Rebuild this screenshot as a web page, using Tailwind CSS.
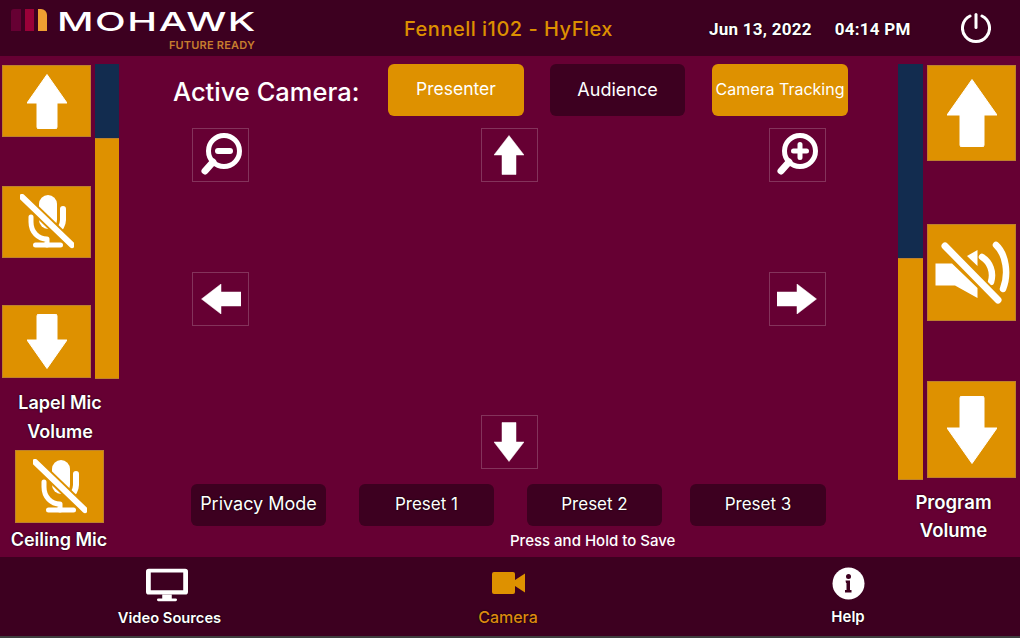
<!DOCTYPE html>
<html lang="en">
<head>
    <meta charset="UTF-8">
    <title>Fennell i102 - HyFlex</title>
    <script src="https://cdn.jsdelivr.net/npm/@tailwindcss/browser@4"></script>
</head>
<body class="w-[1020px] h-[638px] overflow-hidden bg-[#3f3f3f] font-[Inter] text-white">

    <!-- header -->
    <header class="h-[56px] bg-[#3d0020] flex items-start relative">
        <div class="w-[300px] h-full pl-[11px] pt-[9px] flex gap-[4px] items-start shrink-0">
            <div class="w-[10px] h-[22px] rounded-tl-[3px] bg-[#660033]"></div>
            <div class="w-[9px] h-[22px] bg-[#990038]"></div>
            <div class="w-[9px] h-[22px] rounded-tr-[6px] bg-[#ef9f32]"></div>
            <div class="ml-[6px] -mt-[3px]">
                <div class="origin-left scale-x-[1.54] text-[26px] leading-[32px] font-medium tracking-[1px] whitespace-nowrap">MOHAWK</div>
                <div class="w-[198px] text-right text-[11px] leading-[14px] font-semibold tracking-[0.2px] text-[#c77d2e]">FUTURE READY</div>
            </div>
        </div>
        <div class="w-[418px] ml-[-1px] shrink-0 pl-[1px] pt-[15px] text-center text-[20px] leading-[28px] font-medium tracking-[0.5px] text-[#dd9000]">Fennell i102 - HyFlex</div>
        <div class="ml-[-8px] pt-[19px] flex gap-[23px] font-[Roboto] font-bold text-[17px] leading-[20px] tracking-[0.25px] [text-shadow:0_0_2px_#000]">
            <span>Jun 13, 2022</span>
            <span>04:14 PM</span>
        </div>
        <svg class="ml-[50px] mt-[13px]" width="30" height="32" viewBox="0 0 30 32" fill="none" stroke="#fff" stroke-linecap="round">
            <path d="M9 3a13.500 13.500 0 1 0 12 0" stroke-width="3"/>
            <path d="M15 1.500v13" stroke-width="3"/>
        </svg>
    </header>

    <main class="h-[501px] bg-[#660033] flex">

        <!-- lapel mic volume -->
        <section class="w-[120px] shrink-0 pl-[2px]">
            <div class="flex gap-[4px] pt-[8px]">
                <div class="w-[89px] flex flex-col pt-[1px]">
                    <button class="h-[72px] bg-[#de9100] border border-[#a9764a]/60 flex items-center justify-center">
                        <svg width="40" height="55" viewBox="0 0 40 55" fill="#fff"><path d="M20 0.500 40 29H30V53a2 2 0 0 1-2 2H12a2 2 0 0 1-2-2V29H0Z" stroke="#fff" stroke-linejoin="round"/></svg>
                    </button>
                    <button class="h-[72px] mt-[49px] bg-[#de9100] border border-[#a9764a]/60 flex items-center justify-center">
                        <svg width="54" height="56" viewBox="0 0 54 56"><g fill="none" stroke="#fff" stroke-linecap="round"><rect x="19" y="1" width="18" height="34" rx="9" fill="#fff" stroke="none"/><path d="M43 15v11c0 3-1 5-2 7" stroke-width="6"/><path d="M11 23v5c0 10 7 17 16 17M27 45v6" stroke-width="5"/><path d="M15.500 51h25" stroke-width="5"/></g><path d="M2 3 52 51" stroke="#de9100" stroke-width="10"/><path d="M2 3 52 51" stroke="#fff" stroke-width="6" stroke-linecap="round"/></svg>
                    </button>
                    <button class="h-[73px] mt-[47px] bg-[#de9100] border border-[#a9764a]/60 flex items-center justify-center">
                        <svg width="40" height="55" viewBox="0 0 40 55" fill="#fff"><path d="M20 54.500 40 26H30V2a2 2 0 0 0-2-2H12a2 2 0 0 0-2 2V26H0Z" stroke="#fff" stroke-linejoin="round"/></svg>
                    </button>
                </div>
                <div class="w-[24px] h-[315px] bg-[#122c4f] flex flex-col justify-end">
                    <div class="h-[241px] bg-[#de9100] border-y border-[#a9764a]/60"></div>
                </div>
            </div>
            <div class="w-[116px] mt-[9px] text-center text-[18px] leading-[29px] font-semibold [text-shadow:0_0_2px_#000]">Lapel Mic<br>Volume</div>
            <button class="ml-[13px] mt-[4px] w-[89px] h-[73px] bg-[#de9100] border border-[#a9764a]/60 flex items-center justify-center">
                <svg width="54" height="56" viewBox="0 0 54 56"><g fill="none" stroke="#fff" stroke-linecap="round"><rect x="19" y="1" width="18" height="34" rx="9" fill="#fff" stroke="none"/><path d="M43 15v11c0 3-1 5-2 7" stroke-width="6"/><path d="M11 23v5c0 10 7 17 16 17M27 45v6" stroke-width="5"/><path d="M15.500 51h25" stroke-width="5"/></g><path d="M2 3 52 51" stroke="#de9100" stroke-width="10"/><path d="M2 3 52 51" stroke="#fff" stroke-width="6" stroke-linecap="round"/></svg>
            </button>
            <div class="w-[114px] mt-[3px] text-center text-[18px] leading-[28px] font-semibold whitespace-nowrap [text-shadow:0_0_2px_#000]">Ceiling Mic</div>
        </section>

        <!-- camera controls -->
        <section class="w-[777px] shrink-0 pl-[72px] pt-[8px]">
            <div class="flex items-center h-[52px]">
                <div class="w-[196px] ml-[-19px] text-[25.500px] font-medium leading-[32px] whitespace-nowrap translate-y-[2px]">Active Camera:</div>
                <button class="w-[136px] h-[52px] ml-[19px] pb-[2px] rounded-[6px] bg-[#de9100] text-[17.500px]">Presenter</button>
                <button class="w-[135px] h-[52px] ml-[26px] pb-[2px] rounded-[6px] bg-[#3d0020] text-[18px]">Audience</button>
                <button class="w-[136px] h-[52px] ml-[27px] pb-[2px] rounded-[6px] bg-[#de9100] text-[16px] whitespace-nowrap">Camera Tracking</button>
            </div>

            <div class="w-[634px] mt-[12px] grid grid-cols-3 justify-items-center gap-y-[89.500px] [&>*]:w-[57px] [&>*]:h-[54px] [&>*]:border [&>*]:border-white/20 [&>*]:flex [&>*]:items-center [&>*]:justify-center">
                <button class="justify-self-start">
                    <svg width="46" height="48" viewBox="0 0 46 48" fill="none" stroke="#fff" stroke-linecap="round"><circle cx="26" cy="20" r="15.500" stroke-width="5"/><path d="M15 31 7 40" stroke-width="7"/><path d="M20 20h12" stroke-width="6"/></svg>
                </button>
                <button class="ml-[1px]">
                    <svg width="30" height="40" viewBox="0 0 30 40" fill="#fff"><path d="M15 0.500 30 20H22V39.500H8V20H0Z" stroke="#fff" stroke-width="0.500" stroke-linejoin="round"/></svg>
                </button>
                <button class="justify-self-end">
                    <svg width="46" height="48" viewBox="0 0 46 48" fill="none" stroke="#fff" stroke-linecap="round"><circle cx="26" cy="20" r="15.500" stroke-width="5"/><path d="M15 31 7 40" stroke-width="7"/><path d="M19.500 20h13M26 13.500v13" stroke-width="5"/></svg>
                </button>
                <button class="justify-self-start">
                    <svg width="40" height="30" viewBox="0 0 40 30" fill="#fff"><path d="M0.500 15 20 0V8H40V22H20V30Z" stroke="#fff" stroke-width="0.500" stroke-linejoin="round"/></svg>
                </button>
                <div class="!border-0"></div>
                <button class="justify-self-end">
                    <svg width="40" height="30" viewBox="0 0 40 30" fill="#fff"><path d="M39.500 15 20 0V8H0V22H20V30Z" stroke="#fff" stroke-width="0.500" stroke-linejoin="round"/></svg>
                </button>
                <div class="!border-0"></div>
                <button class="ml-[1px]">
                    <svg width="30" height="40" viewBox="0 0 30 40" fill="#fff"><path d="M15 39.500 30 20H22V0.500H8V20H0Z" stroke="#fff" stroke-width="0.500" stroke-linejoin="round"/></svg>
                </button>
                <div class="!border-0"></div>
            </div>

            <div class="flex mt-[15px] ml-[-1px] text-[17px] [&>button]:h-[42px] [&>button]:rounded-[6px] [&>button]:bg-[#3d0020] [&>button]:[text-shadow:0_0_2px_#000]">
                <button class="w-[135px] pb-[4px] text-[18px]">Privacy Mode</button>
                <button class="w-[135px] ml-[33px]">Preset 1</button>
                <button class="w-[135px] ml-[33px]">Preset 2</button>
                <button class="w-[136px] ml-[28px]">Preset 3</button>
            </div>
            <div class="ml-[318px] mt-[6px] text-[15px] leading-[18px] font-medium whitespace-nowrap">Press and Hold to Save</div>
        </section>

        <!-- program volume -->
        <section class="w-[123px] shrink-0 pt-[8px] pl-[1px]">
            <div class="flex gap-[4px]">
                <div class="w-[25px] h-[416px] bg-[#122c4f] flex flex-col justify-end">
                    <div class="h-[222px] bg-[#de9100] border-y border-[#a9764a]/60"></div>
                </div>
                <div class="w-[89px] mt-[1px] flex flex-col">
                    <button class="h-[96px] bg-[#de9100] border border-[#a9764a]/60 flex items-center justify-center">
                        <svg width="50" height="68" viewBox="0 0 50 68" fill="#fff"><path d="M25 0.500 50 36H37V66a2 2 0 0 1-2 2H15a2 2 0 0 1-2-2V36H0Z" stroke="#fff" stroke-linejoin="round"/></svg>
                    </button>
                    <button class="h-[97px] mt-[63px] bg-[#de9100] border border-[#a9764a]/60 flex items-center justify-center">
                        <svg width="76" height="68" viewBox="0 0 76 68"><g fill="#fff"><path d="M1.500 24.500H18L43.500 49V59L21 46.500H1.500Z"/><path d="M33 17 43.500 11V27Z"/></g><g fill="none" stroke="#fff" stroke-width="6.500" stroke-linecap="round"><path d="M48 18c8 5 12 15 9 25"/><path d="M62 6c10 9 13 29 7 44"/></g><path d="M11 7 64 61" stroke="#de9100" stroke-width="11"/><path d="M11 7 64 61" stroke="#fff" stroke-width="7" stroke-linecap="round"/></svg>
                    </button>
                    <button class="h-[97px] mt-[60px] bg-[#de9100] border border-[#a9764a]/60 flex items-center justify-center">
                        <svg width="50" height="68" viewBox="0 0 50 68" fill="#fff"><path d="M25 67.500 50 32H37V2a2 2 0 0 0-2-2H15a2 2 0 0 0-2 2V32H0Z" stroke="#fff" stroke-linejoin="round"/></svg>
                    </button>
                </div>
            </div>
            <div class="w-[111px] mt-[8px] text-center text-[18.500px] leading-[28px] font-semibold [text-shadow:0_0_2px_#000]">Program<br>Volume</div>
        </section>
    </main>

    <!-- bottom nav -->
    <nav class="h-[79px] bg-[#3d0020] flex text-[15px] leading-[20px] font-semibold [text-shadow:0_0_2px_#000]">
        <a class="w-[336px] pt-[11px] flex flex-col items-center">
            <svg class="mr-[2px]" width="42" height="35" viewBox="0 0 44 35" fill="#fff"><path fill-rule="evenodd" d="M3 0H41a3 3 0 0 1 3 3V24a3 3 0 0 1-3 3H3a3 3 0 0 1-3-3V3a3 3 0 0 1 3-3ZM5 4V22.500H39V4Z"/><path d="M17 27h10v4h4a1.500 1.500 0 0 1 0 3H13a1.500 1.500 0 0 1 0-3h4Z"/></svg>
            <span class="mt-[5px] ml-[3px] text-[14.700px]">Video Sources</span>
        </a>
        <a class="w-[344px] pt-[15px] flex flex-col items-center text-[#de8a10] text-[16px] font-medium">
            <svg class="ml-[1px]" width="33" height="22" viewBox="0 0 33 22" fill="#de9100"><rect width="23" height="22" rx="2"/><path d="M23 8 33 1.500V20.500L23 14Z"/></svg>
            <span class="mt-[13px]">Camera</span>
        </a>
        <a class="w-[340px] pt-[10px] pr-[4px] flex flex-col items-center">
            <svg width="33" height="33" viewBox="0 0 33 33"><circle cx="16.500" cy="16.500" r="16" fill="#fff"/><circle cx="16.500" cy="9.500" r="2.500" fill="#3d0020"/><path d="M13.500 13.500h4.500v9.500h1.500v2.500h-6.500V23h1.500v-7h-.5Z" fill="#3d0020"/></svg>
            <span class="mt-[7px]">Help</span>
        </a>
    </nav>
</body>
</html>
